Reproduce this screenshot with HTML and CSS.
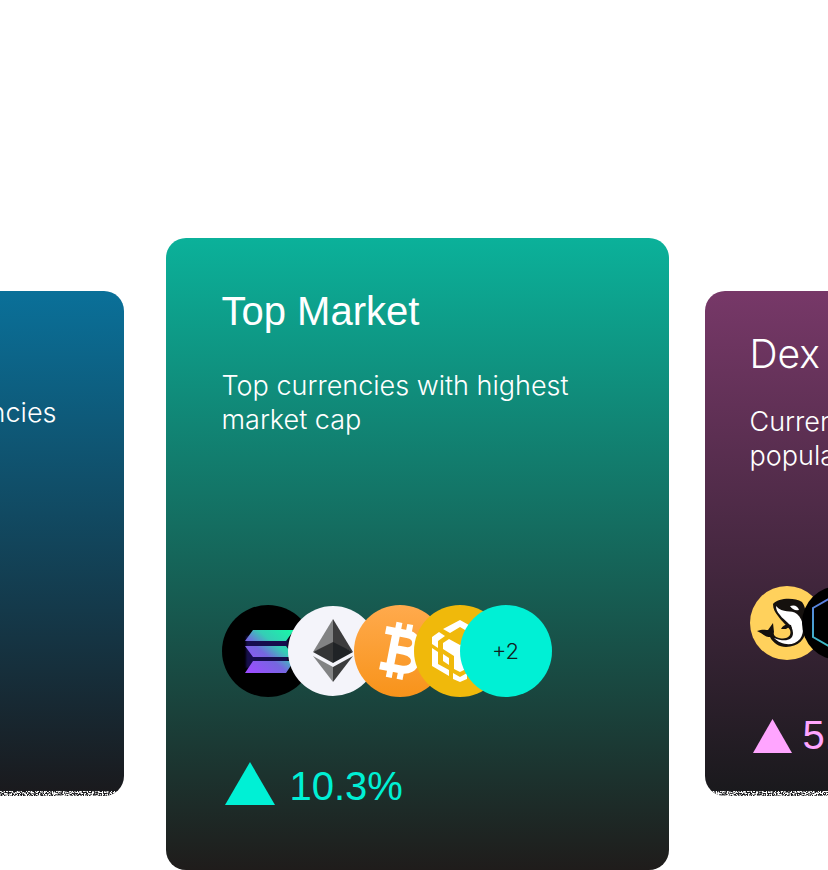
FILE: index.html
```html
<!DOCTYPE html>
<html lang="en">
<head>
<meta charset="utf-8">
<meta name="viewport" content="width=device-width, initial-scale=1">
<title>Markets</title>
<link rel="stylesheet" href="styles.css">
</head>
<body>
<main class="carousel">
  <article class="card card-side card-new">
    <p class="desc">New currencies</p>
    <svg class="grain" aria-hidden="true"><filter id="grain" x="0" y="0" width="100%" height="100%"><feTurbulence type="fractalNoise" baseFrequency="0.8" numOctaves="2" seed="4"/><feColorMatrix values="0 0 0 0 1  0 0 0 0 1  0 0 0 0 1  5 0 0 0 -2"/></filter><rect width="100%" height="100%" filter="url(#grain)"/></svg>
  </article>

  <article class="card card-main">
    <h2 class="title">Top Market</h2>
    <p class="desc">Top currencies with highest market cap</p>
    <div class="coins">
      <svg class="coin" viewBox="0 0 92 92" role="img" aria-label="Solana">
        <defs>
          <linearGradient id="sol" gradientUnits="userSpaceOnUse" x1="66" y1="24" x2="30" y2="68"><stop offset="0" stop-color="#19f5a8"/><stop offset=".35" stop-color="#35cdb6"/><stop offset=".6" stop-color="#7567df"/><stop offset="1" stop-color="#9b4dff"/></linearGradient>
          <filter id="soft"><feGaussianBlur stdDeviation="1.2"/></filter>
        </defs>
        <circle cx="46" cy="46" r="46" fill="#000"/>
        <path d="M24 31H66V63H24Z" fill="#17104e" filter="url(#soft)"/>
        <path d="M31 25H72L64 36H23ZM23 41H64L72 52H31ZM31 56H72L64 68H23Z" fill="url(#sol)"/>
      </svg>
      <svg class="coin coin-eth" viewBox="0 0 90 90" role="img" aria-label="Ethereum">
        <circle cx="45" cy="45" r="45" fill="#f4f4fa"/>
        <path d="M45 13 25 46 45 38Z" fill="#828384"/><path d="M45 13 65 46 45 38Z" fill="#3c3c3d"/>
        <path d="M25 46 45 36V57Z" fill="#343536"/><path d="M65 46 45 36V57Z" fill="#202326"/>
        <path d="M25 50 45 61V76Z" fill="#828384"/><path d="M65 50 45 61V76Z" fill="#3b3c3d"/>
      </svg>
      <svg class="coin coin-btc" viewBox="0 0 92 92" role="img" aria-label="Bitcoin">
        <defs><linearGradient id="btc" x1="0" y1="0" x2="0" y2="1"><stop offset="0" stop-color="#ffaa4d"/><stop offset="1" stop-color="#f8931a"/></linearGradient></defs>
        <circle cx="46" cy="46" r="46" fill="url(#btc)"/>
        <g transform="translate(46 46) rotate(11)" fill="none" stroke="#fff">
          <path d="M-18-18H4C18-18 18-1 4-1H-6M4-1C21-1 21 18 4 18H-17M-7-18V18" stroke-width="8"/>
          <path d="M-6-28V-18M5-28V-18M-6 18V28M5 18V28" stroke-width="6"/>
        </g>
      </svg>
      <svg class="coin coin-bnb" viewBox="0 0 92 92" role="img" aria-label="BNB">
        <circle cx="46" cy="46" r="46" fill="#f0b90b"/>
        <g fill="#fff">
          <path d="M46 15 62 24 56 28 46 22 36 28 29 24Z"/>
          <path d="M25 27 31 31 24 36V43L18 39V32Z"/>
          <path d="M18 43 24 47V59L35 65V71L18 61Z"/>
          <path d="M29 38 35 34 46 40 57 34 63 38V44L52 51V64L46 67 40 64V51L29 44Z"/>
          <path d="M29 49 35 53V60L29 56Z"/><path d="M39 68 46 72 53 68V74L46 77 39 74Z"/>
          <path d="M67 27 74 32V43L68 39ZM68 47 74 43V61L57 71V65L68 59Z"/>
        </g>
      </svg>
      <span class="coin coin-more">+2</span>
    </div>
    <div class="change">
      <svg width="54" height="48" viewBox="0 0 54 48" aria-hidden="true"><path d="M28 0 53 43H3Z" fill="currentColor"/></svg>
      <span>10.3%</span>
    </div>
  </article>

  <article class="card card-side card-dex">
    <h2 class="title">Dex</h2>
    <p class="desc">Currencies<br>popular</p>
    <div class="coins">
      <svg class="coin" viewBox="0 0 74 74" role="img" aria-label="Orca">
        <circle cx="37" cy="37" r="37" fill="#ffd15c"/>
        <path d="M23 18C28 12 44 11 52 16C57 22 55 31 56 37C58 52 49 61 36 61C29 61 23 57 20 51C14 51 14 48 7 45C12 43 16 44 18 44L23 37L24 46C23 49 25 51 29 52C37 54 42 50 40 44C38 40 31 35 28 30C25 26 23 23 23 18Z" fill="#15110e"/>
        <path d="M26 20C33 28 41 23 47 28C54 34 55 46 50 53C43 61 31 59 24 52C34 56 43 55 43 47C43 38 34 35 30 29C27 26 26 23 26 20Z" fill="#fff"/>
        <path d="M40 20Q47 18 49 24Q43 25 40 20Z" fill="#fff"/>
        <path d="M31 43Q34 37 41 39L42 43Q39 40 36 43Z" fill="#15110e"/>
      </svg>
      <svg class="coin coin-hex" viewBox="0 0 74 74" role="img" aria-label="Hex coin">
        <defs><linearGradient id="hex" x1="0" y1="0" x2="0" y2="1"><stop offset="0" stop-color="#6274e7"/><stop offset="1" stop-color="#36c5c0"/></linearGradient></defs>
        <circle cx="37" cy="37" r="37" fill="#000"/>
        <path d="M37 7 11 22V51L37 66 63 51V22Z" fill="none" stroke="url(#hex)" stroke-width="2"/>
      </svg>
    </div>
    <div class="change">
      <svg width="43" height="48" viewBox="0 0 43 48" aria-hidden="true"><path d="M22.500 8 42 42H3Z" fill="currentColor"/></svg>
      <span>5.1%</span>
    </div>
    <svg class="grain" aria-hidden="true"><rect width="100%" height="100%" filter="url(#grain)"/></svg>
  </article>
</main>
</body>
</html>
```
FILE: styles.css
```css
* {
  box-sizing: border-box;
}

body {
  margin: 0;
  background: #fff;
  color: #fff;
  font-family: Inter, "Liberation Sans", sans-serif;
  overflow: hidden;
}

.carousel {
  display: flex;
  justify-content: center;
  align-items: flex-start;
  padding-top: 238px;
  overflow: hidden;
}

.card {
  position: relative;
  flex: none;
  overflow: hidden;
  border-radius: 20px;
}

.card-main {
  width: 503px;
  margin: 0 36px 0 42px;
  padding: 51px 56px 60px;
  background: linear-gradient(#0bb19a, #1f1c1b);
}

.card-side {
  width: 403px;
  min-height: 505px;
  margin-top: 53px;
}

.card-new {
  padding: 105px 67px 37px 45px;
  background: linear-gradient(#0a7099, #1a191c);
  text-align: right;
}

.card-dex {
  padding: 41px 45px 37px;
  background: linear-gradient(#773868, #19191c);
}

.title {
  margin: 0;
  font: 400 40px/44px "Liberation Sans", sans-serif;
}

.card-dex .title {
  font: 300 39px/44px Inter, sans-serif;
}

.desc {
  margin: 0;
  font-size: 27px;
  line-height: 34px;
  font-weight: 300;
}

.card-main .desc {
  margin-top: 36px;
}

.card-dex .desc {
  margin-top: 29px;
}

.coins {
  display: flex;
  align-items: center;
  margin-top: 168px;
}

.card-dex .coins {
  margin-top: 113px;
}

.coin {
  display: block;
  flex: none;
  width: 92px;
  height: 92px;
}

.card-dex .coin {
  width: 74px;
  height: 74px;
}

.coin-eth {
  width: 90px;
  height: 90px;
  margin-left: -26px;
}

.coin-btc {
  margin-left: -24px;
}

.coin-bnb {
  margin-left: -32px;
}

.coin-more {
  display: grid;
  place-items: center;
  margin-left: -46px;
  border-radius: 50%;
  background: #00f0d5;
  color: #10221f;
  font-size: 22px;
  font-weight: 300;
}

.coin-hex {
  margin-left: -22px;
}

.change {
  display: flex;
  gap: 14px;
  margin-top: 65px;
  color: #00f0d5;
  font: 400 40px/48px "Liberation Sans", sans-serif;
}

.card-dex .change {
  gap: 10px;
  margin-top: 51px;
  color: #ffa5ff;
}

.grain {
  position: absolute;
  left: 0;
  bottom: 0;
  width: 100%;
  height: 5px;
}
```
